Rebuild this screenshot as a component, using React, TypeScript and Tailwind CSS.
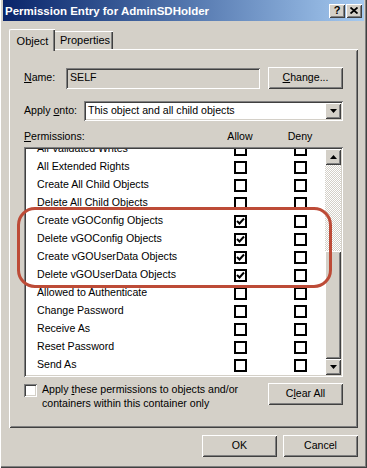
import React from 'react';

const raised =
  'shadow-[inset_1px_1px_0_#fff,inset_-1px_-1px_0_#404040,inset_2px_2px_0_#d4d0c8,inset_-2px_-2px_0_#808080]';
const sunken =
  'shadow-[inset_1px_1px_0_#808080,inset_-1px_-1px_0_#fff,inset_2px_2px_0_#404040,inset_-2px_-2px_0_#d4d0c8]';

const perms: [string, boolean][] = [
  ['All Validated Writes', false],
  ['All Extended Rights', false],
  ['Create All Child Objects', false],
  ['Delete All Child Objects', false],
  ['Create vGOConfig Objects', true],
  ['Delete vGOConfig Objects', true],
  ['Create vGOUserData Objects', true],
  ['Delete vGOUserData Objects', true],
  ['Allowed to Authenticate', false],
  ['Change Password', false],
  ['Receive As', false],
  ['Reset Password', false],
  ['Send As', false],
];

const Box: React.FC<{ checked?: boolean }> = ({ checked }) => (
  <div className="w-[13px] h-[13px] border-2 border-black bg-white shrink-0 flex items-center justify-center">
    {checked && (
      <svg width="9" height="9" viewBox="0 0 9 9">
        <path d="M1 4 L3.5 6.5 L8 1.5" stroke="#000" strokeWidth="2" fill="none" />
      </svg>
    )}
  </div>
);

const Button: React.FC<{ className?: string; children: React.ReactNode }> = ({ className, children }) => (
  <button className={`bg-[#d4d0c8] ${raised} flex items-center justify-center text-black ${className}`}>
    {children}
  </button>
);

const ArrowDown = () => (
  <svg width="7" height="4" viewBox="0 0 7 4">
    <path d="M0 0 H7 L3.5 4 Z" fill="#000" />
  </svg>
);

const App: React.FC = () => {
  return (
    <div className="w-[367px] h-[468px] bg-[#d4d0c8] px-[3px] pb-[3px] flex flex-col font-['Liberation_Sans',Arial,sans-serif] text-[10.6px] text-black shadow-[inset_1px_0_0_#fff,inset_-1px_-1px_0_#404040,inset_-2px_-2px_0_#808080] overflow-hidden select-none">
      {/* title bar */}
      <div className="h-[21px] shrink-0 bg-gradient-to-r from-[#0a246a] to-[#a6caf0] flex items-center pl-[2px] pr-[2px]">
        <span className="text-white font-bold text-[11.5px] flex-1 pt-[2px]">Permission Entry for AdminSDHolder</span>
        <Button className="w-[16px] h-[14px] font-bold text-[11px] leading-none">?</Button>
        <Button className="w-[16px] h-[14px] ml-[1px]">
          <svg width="8" height="7" viewBox="0 0 8 7">
            <path d="M0.5 0.5 L7.5 6.5 M7.5 0.5 L0.5 6.5" stroke="#000" strokeWidth="1.8" />
          </svg>
        </Button>
      </div>

      <div className="flex-1 flex flex-col px-[6px]">
        {/* tabs */}
        <div className="flex items-end h-[20px] mt-[8px] text-[11px]">
          <div className="relative z-10 w-[46px] h-[22px] -mb-[2px] bg-[#d4d0c8] border-t border-l border-white rounded-tl-[2px] shadow-[inset_-1px_0_0_#404040,inset_-2px_0_0_#808080] flex items-start justify-center pt-[3px]">
            Object
          </div>
          <div className="w-[58px] h-[18px] bg-[#d4d0c8] border-t border-white shadow-[inset_-1px_0_0_#404040,inset_-2px_0_0_#808080] flex items-center justify-center pl-[2px]">
            Properties
          </div>
        </div>

        {/* panel */}
        <div className={`relative h-[379px] bg-[#d4d0c8] ${raised} px-[15px] flex flex-col`}>
          <div className="flex items-center h-[22px] mt-[18px]">
            <span className="w-[42px]">
              <u>N</u>ame:
            </span>
            <div className={`w-[194px] h-[21px] bg-[#d4d0c8] ${sunken} flex items-center pl-[4px]`}>SELF</div>
            <Button className="w-[75px] h-[22px] ml-[8px]">
              <span>
                <u>C</u>hange...
              </span>
            </Button>
          </div>

          <div className="flex items-center h-[20px] mt-[12px]">
            <span className="w-[60px]">
              Apply <u>o</u>nto:
            </span>
            <div className={`flex-1 h-[20px] bg-white ${sunken} flex items-center pl-[4px] pr-[2px]`}>
              <span className="flex-1">This object and all child objects</span>
              <Button className="w-[16px] h-[16px]">
                <ArrowDown />
              </Button>
            </div>
          </div>

          <div className="relative h-[14px] mt-[9px] flex items-center">
            <span>
              <u>P</u>ermissions:
            </span>
            <span className="absolute left-[196px] w-[40px] text-center">Allow</span>
            <span className="absolute left-[256px] w-[40px] text-center">Deny</span>
          </div>

          <div className={`h-[230px] mt-[3px] bg-white ${sunken} p-[2px] flex`}>
            <div className="flex-1 overflow-hidden">
              <div className="-mt-[9px]">
                {perms.map(([name, allow]) => (
                  <div key={name} className="h-[18px] flex items-center">
                    <span className="w-[208px] pl-[11px] shrink-0 whitespace-nowrap">{name}</span>
                    <Box checked={allow} />
                    <div className="w-[47px] shrink-0" />
                    <Box />
                  </div>
                ))}
              </div>
            </div>
            <div className="w-[16px] flex flex-col">
              <Button className="h-[16px] shrink-0">
                <svg width="7" height="4" viewBox="0 0 7 4">
                  <path d="M0 4 H7 L3.5 0 Z" fill="#000" />
                </svg>
              </Button>
              <div className="h-[86px] bg-[repeating-conic-gradient(#d4d0c8_0_25%,#fff_0_50%)] bg-[length:2px_2px]" />
              <div className={`flex-1 bg-[#d4d0c8] ${raised}`} />
              <Button className="h-[16px] shrink-0">
                <ArrowDown />
              </Button>
            </div>
          </div>

          <div className="flex items-start mt-[6px]">
            <div className={`w-[13px] h-[13px] mt-[1px] bg-white ${sunken} shrink-0`} />
            <div className="ml-[5px] leading-[13.5px] w-[200px] whitespace-nowrap">
              <div>
                Apply <u>t</u>hese permissions to objects and/or
              </div>
              <div>containers within this container only</div>
            </div>
            <Button className="w-[75px] h-[22px] ml-auto">
              <span>
                C<u>l</u>ear All
              </span>
            </Button>
          </div>

          {/* annotation */}
          <div className="absolute left-[8px] top-[158px] w-[315px] h-[81px] border-[3px] border-[#bd4b37] rounded-[18px] pointer-events-none z-20" />
        </div>

        <div className="flex justify-end mt-[7px]">
          <Button className="w-[75px] h-[22px]">OK</Button>
          <Button className="w-[75px] h-[22px] ml-[6px]">Cancel</Button>
        </div>
      </div>
    </div>
  );
};

export default App;
